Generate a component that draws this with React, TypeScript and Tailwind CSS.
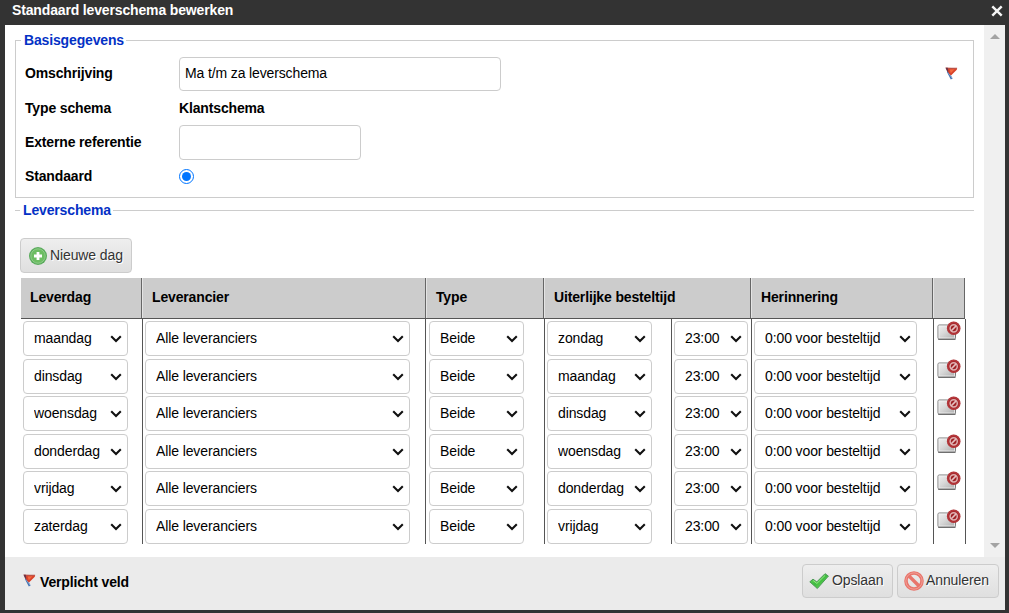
import React from "react";

const rows = [
  ["maandag", "zondag"],
  ["dinsdag", "maandag"],
  ["woensdag", "dinsdag"],
  ["donderdag", "woensdag"],
  ["vrijdag", "donderdag"],
  ["zaterdag", "vrijdag"],
];

function Flag() {
  return (
    <svg width="13" height="13" viewBox="0 0 13 13" className="block shrink-0">
      <path d="M2.800 4.500 6.700 12" stroke="#3f6fb0" strokeWidth="2" />
      <path d="M3.600 6 7.600 11.800" stroke="#a9c3e2" strokeWidth=".7" />
      <path d="M.6.800 12.200 1.300 11.800 2.800 6 8.400Q4.600 7.800 3 5Z" fill="#d9432a" />
      <path d="M.6.700h11.500l-.2 1.100H1.400Z" fill="#b5524a" />
      <path d="M.5.700h2.300L3.300 4.600 2.300 4.900Z" fill="#6a3347" />
      <path d="M4.600 2.600 9.600 2.300 5.800 6.200Z" fill="#f2683f" />
    </svg>
  );
}

function BlockedIcon() {
  return (
    <svg width="24" height="21" viewBox="0 0 24 21" className="block">
      <defs>
        <linearGradient id="tray" x1="0" y1="0" x2="1" y2="1">
          <stop offset="0" stopColor="#f0f0f0" />
          <stop offset=".45" stopColor="#d8d8d8" />
          <stop offset="1" stopColor="#aaa" />
        </linearGradient>
      </defs>
      <rect x="1" y="4" width="17.500" height="14" rx="1.200" fill="url(#tray)" stroke="#777" />
      <rect x="2" y="5" width="15.500" height="12" fill="none" stroke="#f4f4f4" strokeOpacity=".75" />
      <path d="M1.200 18.400h17.300" stroke="#6b6b6b" strokeWidth="1.100" />
      <circle cx="16.700" cy="7.300" r="6.800" fill="#a82a2e" />
      <circle cx="16.700" cy="7.300" r="5.900" fill="none" stroke="#c4484b" strokeWidth=".6" />
      <circle cx="16.700" cy="7.300" r="3.600" fill="#9f2327" stroke="#dfb0b0" strokeWidth="1.500" />
      <path d="m14.300 9.700 4.800-4.800" stroke="#e5c0c0" strokeWidth="1.600" />
    </svg>
  );
}

function Select({ value, className }: { value: string; className: string }) {
  return (
    <div className={`relative h-[35px] ${className}`}>
      <select
        defaultValue={value}
        className="block h-full w-full appearance-none rounded-[4px] border border-[#ccc] bg-white pb-[2px] pl-[10px] pr-5 text-[14px] leading-4 tracking-[-0.11px] text-black outline-none"
      >
        <option>{value}</option>
      </select>
      <svg
        width="12"
        height="8"
        viewBox="0 0 12 8"
        className="pointer-events-none absolute right-[6px] top-[14px]"
      >
        <path d="m1.200 1.300 4.800 4.700 4.800-4.700" fill="none" stroke="#111" strokeWidth="2.100" />
      </svg>
    </div>
  );
}

const headCell = "flex h-10 items-center border-r border-r-[#666] pb-[2px]";
const innerHead = "border-l border-l-[#e4e4e4] pl-[9px]";
const bodyCell = "border-r border-[#555] pt-[2px]";
const button =
  "flex items-center rounded-[4px] border border-[#ccc] bg-linear-to-b from-[#eee] to-[#dfdfdf] text-[14px] leading-4 tracking-[-0.11px] text-[#333] [text-shadow:1px_1px_0_#fff]";
const label = "w-[154px] shrink-0";
const legend = "font-bold text-[#0431c5]";

export default function App() {
  return (
    <div className="flex h-[613px] w-[1009px] flex-col overflow-hidden bg-[#333] font-['Liberation_Sans',Arial,sans-serif] text-[14px] leading-4 tracking-[-0.15px] text-black">
      <header className="flex h-[25px] shrink-0 items-start justify-between pl-3 pr-[6px] pt-[2px] font-bold text-white">
        <span>Standaard leverschema bewerken</span>
        <svg width="12" height="12" viewBox="0 0 12 12" className="mt-[3px]">
          <path d="m1.300 1.300 9.400 9.400m0-9.400-9.400 9.400" stroke="#f5f5f5" strokeWidth="2.400" />
        </svg>
      </header>

      <div className="mx-[5px] mr-1 flex h-[532px] shrink-0 bg-white">
        <main className="w-[979px] pl-[10px] pt-[7px]">
          <fieldset className="h-[166px] w-[959px] border border-[#ccc] pl-[9px]">
            <legend className={`-ml-[4px] mb-2 pl-[3px] pr-[2px] ${legend}`}>Basisgegevens</legend>
            <div className="flex h-[35px] items-center font-bold">
              <label className={`${label} pb-px`}>Omschrijving</label>
              <input
                defaultValue="Ma t/m za leverschema"
                className="h-[34px] w-[322px] rounded-[4px] border border-[#ccc] px-[5px] pb-[2px] text-[14px] font-normal leading-4 tracking-[-0.13px] outline-none"
              />
              <div className="ml-auto mr-[15px]">
                <Flag />
              </div>
            </div>
            <div className="flex h-[34px] items-center font-bold">
              <span className={label}>Type schema</span>
              <span>Klantschema</span>
            </div>
            <div className="flex h-[34px] items-center font-bold">
              <label className={label}>Externe referentie</label>
              <input className="h-[35px] w-[182px] rounded-[4px] border border-[#ccc] px-[5px] outline-none" />
            </div>
            <div className="flex h-[34px] items-center font-bold">
              <label className={label}>Standaard</label>
              <span className="flex size-[15px] items-center justify-center rounded-full border-[1.5px] border-[#0075ff]">
                <span className="size-[9px] rounded-full bg-[#0075ff]" />
              </span>
            </div>
          </fieldset>

          <div className="mt-1 flex h-4 w-[959px] items-center">
            <span className="h-px w-[5px] bg-[#ccc]" />
            <span className={`pl-[3px] pr-[2px] ${legend}`}>Leverschema</span>
            <span className="h-px flex-1 bg-[#ccc]" />
          </div>

          <button className={`ml-[5px] mt-5 h-[35px] w-[112px] pl-2 ${button}`}>
            <svg width="18" height="18" viewBox="0 0 18 18" className="mr-[3px] mt-px">
              <circle cx="9" cy="9" r="9" fill="#5aab5c" />
              <circle cx="9" cy="9" r="7.200" fill="#6cbd62" stroke="#93cf8c" strokeWidth=".9" />
              <path d="M9 5v8M5 9h8" stroke="#fff" strokeWidth="2.800" />
            </svg>
            <span className="pb-[2px]">Nieuwe dag</span>
          </button>

          <div className="ml-[6px] mt-[5px] flex h-[41px] w-[944px] border-b border-[#555] bg-[#ccc] font-bold">
            <div className={`w-[121px] pl-[9px] ${headCell}`}>Leverdag</div>
            <div className={`w-[284px] ${headCell} ${innerHead}`}>Leverancier</div>
            <div className={`w-[118px] ${headCell} ${innerHead}`}>Type</div>
            <div className={`w-[207px] ${headCell} ${innerHead}`}>Uiterlijke besteltijd</div>
            <div className={`w-[182px] ${headCell} ${innerHead}`}>Herinnering</div>
            <div className={`w-[32px] ${headCell} ${innerHead}`} />
          </div>

          <div className="ml-[5px] w-[946px]">
            {rows.map(([day, deadline]) => (
              <div key={day} className="flex odd:h-[38px] even:h-[37px]">
                <div className={`w-[123px] pl-[3px] ${bodyCell}`}>
                  <Select value={day} className="w-[105px]" />
                </div>
                <div className={`w-[283px] pl-[2px] ${bodyCell}`}>
                  <Select value="Alle leveranciers" className="w-[265px]" />
                </div>
                <div className={`w-[119px] pl-[3px] ${bodyCell}`}>
                  <Select value="Beide" className="w-[95px]" />
                </div>
                <div className={`w-[127px] pl-[2px] ${bodyCell}`}>
                  <Select value={deadline} className="w-[105px]" />
                </div>
                <div className={`w-[80px] pl-[2px] ${bodyCell}`}>
                  <Select value="23:00" className="w-[74px]" />
                </div>
                <div className={`w-[182px] pl-[2px] ${bodyCell}`}>
                  <Select value="0:00 voor besteltijd" className="w-[163px]" />
                </div>
                <div className={`w-[32px] pl-[3px] ${bodyCell}`}>
                  <BlockedIcon />
                </div>
              </div>
            ))}
          </div>
        </main>

        <div className="flex w-[21px] flex-col items-center justify-between bg-[#f0f0f0] pb-[9px] pt-[9px]">
          <svg width="10" height="5" viewBox="0 0 10 5">
            <path d="M0 5 5 0l5 5Z" fill="#a3a3a3" />
          </svg>
          <svg width="10" height="5" viewBox="0 0 10 5">
            <path d="m0 0 5 5 5-5Z" fill="#a3a3a3" />
          </svg>
        </div>
      </div>

      <footer className="ml-[5px] mr-1 flex h-[53px] shrink-0 items-start bg-[#ebebeb] pl-[18px] pr-[6px] pt-[7px]">
        <div className="mt-[10px] flex font-bold">
          <Flag />
          <span className="ml-1">Verplicht veld</span>
        </div>
        <button className={`ml-auto h-[34px] w-[91px] pl-[6px] ${button}`}>
          <svg width="21" height="18" viewBox="0 0 21 18" className="mr-[2px]">
            <defs>
              <linearGradient id="check" x1="0" y1="0" x2="1" y2="1">
                <stop offset="0" stopColor="#6fd65c" />
                <stop offset=".5" stopColor="#3dbb40" />
                <stop offset="1" stopColor="#7ee25f" />
              </linearGradient>
            </defs>
            <path
              d="m.8 9.800 3.200-2.600 3.800 2.700L16 1.700l3.400 2.400L8.300 16.500Z"
              fill="url(#check)"
              stroke="#4a9a55"
              strokeLinejoin="round"
            />
            <path d="m4.200 8.600 3.700 2.800 8.200-8" fill="none" stroke="#a4ee8c" strokeWidth=".9" />
          </svg>
          <span className="pb-[2px]">Opslaan</span>
        </button>
        <button className={`ml-1 h-[34px] w-[102px] pl-[6px] ${button}`}>
          <svg width="20" height="20" viewBox="0 0 20 20" className="mr-[2px]">
            <circle cx="10" cy="10" r="8" fill="none" stroke="#e8756c" strokeWidth="3.600" />
            <path d="m4.500 4.500 11 11" stroke="#e8756c" strokeWidth="3.400" />
            <circle cx="10" cy="10" r="8.200" fill="none" stroke="#f2a097" strokeWidth="1" />
          </svg>
          <span className="pb-[2px]">Annuleren</span>
        </button>
      </footer>
    </div>
  );
}
